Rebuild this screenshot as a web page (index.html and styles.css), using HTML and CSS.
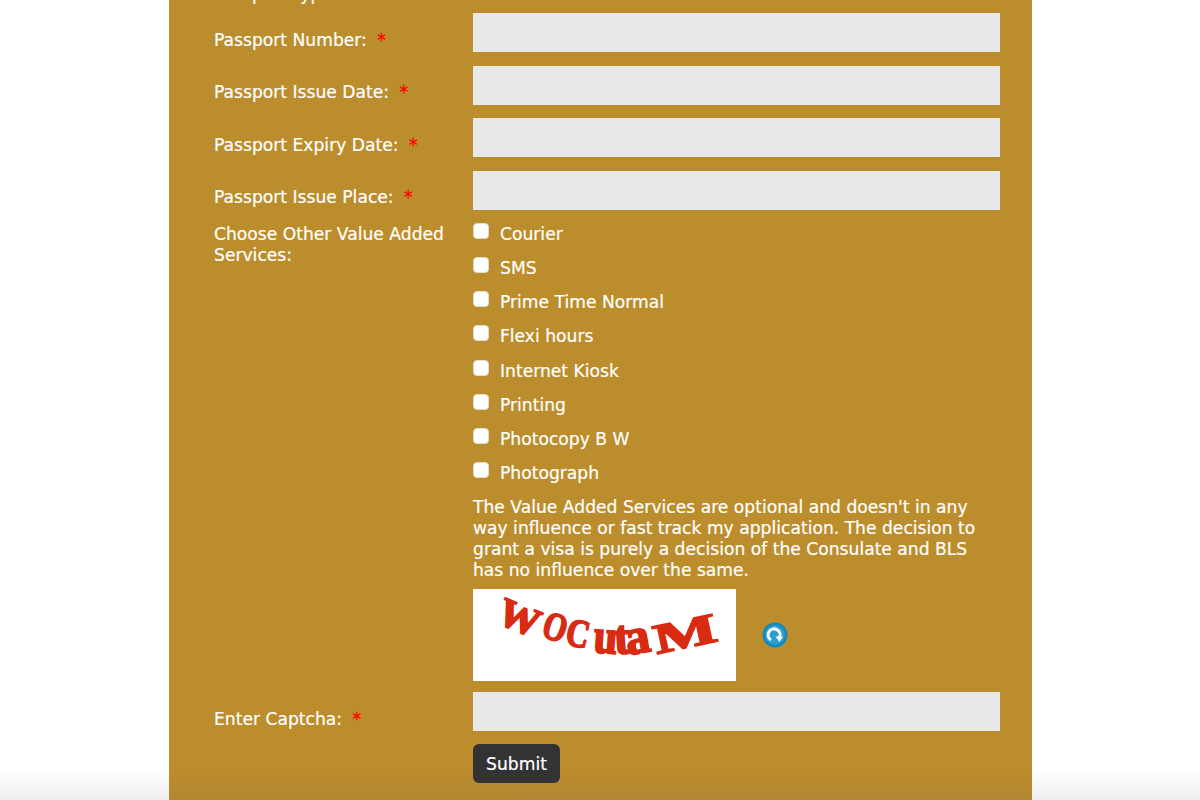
FILE: index.html
```html
<!DOCTYPE html>
<html lang="en">
<head>
<meta charset="utf-8">
<title>Visa application form</title>
<link rel="stylesheet" href="styles.css">
</head>
<body>
<main class="panel">
  <div class="row clipped-row"><label class="label">Passport Type: <span class="req">*</span></label><div class="field"></div></div>
  <div class="row"><label class="label">Passport Number: <span class="req">*</span></label><div class="field"><input class="text-input" type="text"></div></div>
  <div class="row"><label class="label">Passport Issue Date: <span class="req">*</span></label><div class="field"><input class="text-input" type="text"></div></div>
  <div class="row"><label class="label">Passport Expiry Date: <span class="req">*</span></label><div class="field"><input class="text-input" type="text"></div></div>
  <div class="row"><label class="label">Passport Issue Place: <span class="req">*</span></label><div class="field"><input class="text-input" type="text"></div></div>
  <div class="row services">
    <label class="label label-top">Choose Other Value Added Services:</label>
    <div class="field">
      <label class="check"><input type="checkbox"><span>Courier</span></label>
      <label class="check"><input type="checkbox"><span>SMS</span></label>
      <label class="check"><input type="checkbox"><span>Prime Time Normal</span></label>
      <label class="check"><input type="checkbox"><span>Flexi hours</span></label>
      <label class="check"><input type="checkbox"><span>Internet Kiosk</span></label>
      <label class="check"><input type="checkbox"><span>Printing</span></label>
      <label class="check"><input type="checkbox"><span>Photocopy B W</span></label>
      <label class="check"><input type="checkbox"><span>Photograph</span></label>
      <p class="note">The Value Added Services are optional and doesn't in any way influence or fast track my application. The decision to grant a visa is purely a decision of the Consulate and BLS has no influence over the same.</p>
      <div class="captcha-line">
        <div class="captcha">
          <svg viewBox="0 0 263 92" width="263" height="92">
            <text class="captcha-text" transform="translate(22 33) rotate(22) scale(1 .95)">W</text>
            <text class="captcha-text" transform="translate(67 47) rotate(18) scale(.72 .95)">O</text>
            <text class="captcha-text" transform="translate(91 55) rotate(12) scale(.76 .95)">C</text>
            <text class="captcha-text" transform="translate(120 63) rotate(4) scale(1 1.15)">u</text>
            <text class="captcha-text" transform="translate(142 65) rotate(-4) scale(1.1 1.15)">t</text>
            <text class="captcha-text" transform="translate(155 66) rotate(-10) scale(1.15 1.2)">a</text>
            <text class="captcha-text" transform="translate(184 65) rotate(-12) scale(1.6 1)">M</text>
          </svg>
        </div>
        <svg class="refresh" viewBox="0 0 26 26" width="26" height="26">
          <circle cx="13" cy="13" r="12.5" fill="#1587bd"/>
          <circle cx="13" cy="13" r="10" fill="#2a9fd0"/>
          <path d="M9 18 A6 6 0 1 1 17.5 15.5" fill="none" stroke="#fff" stroke-width="3"/>
          <path d="M13.5 14.5 L21 14.5 L17.5 20 Z" fill="#fff"/>
        </svg>
      </div>
    </div>
  </div>
  <div class="row captcha-row"><label class="label">Enter Captcha: <span class="req">*</span></label><div class="field"><input class="text-input" type="text"></div></div>
  <div class="row submit-row"><div class="label"></div><div class="field"><button class="submit" type="button">Submit</button></div></div>
</main>
<div class="bottom-fade"></div>
</body>
</html>
```
FILE: styles.css
```css
html, body {
  margin: 0;
  height: 800px;
  overflow: hidden;
  background: #fff;
}
body {
  font-family: "DejaVu Sans", Verdana, sans-serif;
  font-size: 17.15px;
  line-height: 21px;
  color: #fff;
  -webkit-text-stroke: 0.2px #fff;
}
.panel {
  box-sizing: border-box;
  width: 863px;
  height: 820px;
  margin: -20px 0 0 169px;
  padding-left: 45px;
  background: #bc8d2c;
}
.row {
  display: flex;
  align-items: flex-end;
  height: 39px;
  margin-bottom: 13.6px;
}
.clipped-row {
  height: 26px;
  margin-bottom: 7px;
}
.label {
  flex: 0 0 259px;
  box-sizing: border-box;
  padding-right: 14px;
  padding-bottom: 1.5px;
}
.req {
  color: #f00;
  -webkit-text-stroke: 0.3px #f00;
  margin-left: 5px;
}
.field {
  flex: 0 0 527px;
}
.text-input {
  display: block;
  box-sizing: border-box;
  width: 527px;
  height: 39px;
  border: 0;
  padding: 0 8px;
  background: #e8e8e8;
}
.services {
  align-items: flex-start;
  height: auto;
  margin-top: -0.6px;
  margin-bottom: 11px;
}
.services .label {
  padding-top: 1px;
}
.check {
  display: flex;
  align-items: flex-start;
  height: 34.2px;
}
.check input {
  appearance: none;
  box-sizing: border-box;
  width: 16px;
  height: 16px;
  margin: 0 11px 0 0;
  border-radius: 4px;
  background: #fff;
  border: 1px solid #e2dccb;
}
.check span {
  padding-top: 1px;
}
.note {
  margin: 0;
  padding-top: 1px;
  width: 510px;
}
.captcha-line {
  display: flex;
  align-items: center;
  margin-top: 8px;
}
.captcha {
  width: 263px;
  height: 92px;
  background: #fff;
}
.captcha svg {
  display: block;
}
.captcha-text {
  font-family: "Liberation Serif", serif;
  font-weight: 700;
  font-size: 42px;
  fill: #d92a12;
  stroke: #d92a12;
  stroke-width: 1.8px;
  -webkit-text-stroke: 0;
}
.refresh {
  margin-left: 26px;
}
.captcha-row {
  margin-bottom: 13px;
}
.submit-row {
  margin-bottom: 0;
}
.submit {
  width: 87px;
  height: 39px;
  border: 0;
  border-radius: 6px;
  background: #333335;
  color: #fff;
  font: 17.15px/21px "DejaVu Sans", Verdana, sans-serif;
  -webkit-text-stroke: 0.2px #fff;
  padding: 2px 0 0;
}
.bottom-fade {
  position: fixed;
  left: 0;
  right: 0;
  bottom: 0;
  height: 30px;
  background: linear-gradient(rgba(90, 90, 110, 0), rgba(90, 90, 110, 0.1));
  pointer-events: none;
}
```
